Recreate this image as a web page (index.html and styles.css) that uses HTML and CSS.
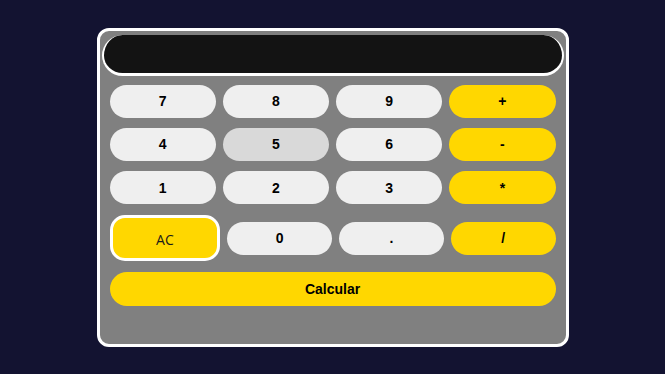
FILE: index.html
```html
<!DOCTYPE html>
<html lang="es">
<head>
<meta charset="utf-8">
<title>Calculadora</title>
<link rel="stylesheet" href="styles.css">
</head>
<body>
<div class="calc">
  <div class="display"></div>
  <div class="keypad">
    <div class="row">
      <button class="key">7</button>
      <button class="key">8</button>
      <button class="key">9</button>
      <button class="key op">+</button>
    </div>
    <div class="row">
      <button class="key">4</button>
      <button class="key hover">5</button>
      <button class="key">6</button>
      <button class="key op">-</button>
    </div>
    <div class="row">
      <button class="key">1</button>
      <button class="key">2</button>
      <button class="key">3</button>
      <button class="key op">*</button>
    </div>
    <div class="row row-last">
      <button class="key clear">AC</button>
      <button class="key">0</button>
      <button class="key">.</button>
      <button class="key op">/</button>
    </div>
    <button class="key op equals">Calcular</button>
  </div>
</div>
</body>
</html>
```
FILE: styles.css
```css
html, body {
  margin: 0;
  padding: 0;
}
body {
  height: 100vh;
  background: #131331;
  display: flex;
  align-items: center;
  justify-content: center;
}
.calc {
  box-sizing: border-box;
  width: 472px;
  height: 319px;
  background: #808080;
  border: 3px solid #ffffff;
  border-radius: 12px;
  padding: 4px 2px 0;
}
.display {
  height: 38px;
  background: #131313;
  border: 2px solid #ffffff;
  border-top: 0;
  border-bottom-width: 3px;
  border-radius: 21px;
}
.keypad {
  margin: 9px 8px 0;
  display: flex;
  flex-direction: column;
  gap: 10px;
}
.row {
  display: flex;
  gap: 7px;
  align-items: center;
}
.row-last {
  margin-top: 1px;
}
.key {
  box-sizing: border-box;
  flex: 1 1 0;
  min-width: 0;
  height: 33.33px;
  margin: 0;
  padding: 0;
  border: 0;
  border-radius: 20px;
  background: #efefef;
  color: #000000;
  font-family: "Liberation Sans", Arial, sans-serif;
  font-weight: bold;
  font-size: 14px;
}
.key.hover {
  background: #d9d9d9;
}
.key.op {
  background: #ffd700;
}
.key.clear {
  height: 46px;
  padding-top: 2px;
  background: #ffd700;
  border: 3px solid #ffffff;
  border-radius: 15px;
  font-family: "Open Sans", "Noto Sans", sans-serif;
  font-weight: normal;
  font-size: 14px;
  color: #1a1a1a;
}
.key.equals {
  flex: none;
  width: 100%;
  margin-top: 1px;
}
```
